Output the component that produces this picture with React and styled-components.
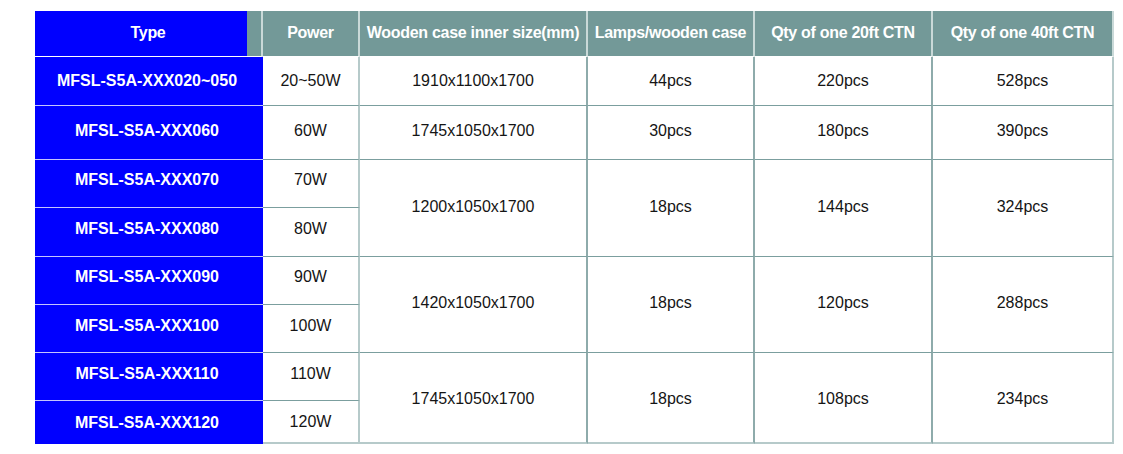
import React from "react";
import styled, { createGlobalStyle } from "styled-components";

const GlobalStyle = createGlobalStyle`
  body {
    margin: 0;
    background: #ffffff;
    font-family: "Liberation Sans", Arial, sans-serif;
  }
`;

// pad lifts the text up from the middle of its cell (negative drops it)
const groups = [
  {
    items: [{ type: "MFSL-S5A-XXX020~050", power: "20~50W", pad: 0 }],
    size: "1910x1100x1700",
    lamps: "44pcs",
    c20: "220pcs",
    c40: "528pcs",
    pad: 0,
  },
  {
    items: [{ type: "MFSL-S5A-XXX060", power: "60W", pad: 4 }],
    size: "1745x1050x1700",
    lamps: "30pcs",
    c20: "180pcs",
    c40: "390pcs",
    pad: 4,
  },
  {
    items: [
      { type: "MFSL-S5A-XXX070", power: "70W", pad: 7 },
      { type: "MFSL-S5A-XXX080", power: "80W", pad: 7 },
    ],
    size: "1200x1050x1700",
    lamps: "18pcs",
    c20: "144pcs",
    c40: "324pcs",
    pad: 3,
  },
  {
    items: [
      { type: "MFSL-S5A-XXX090", power: "90W", pad: 8 },
      { type: "MFSL-S5A-XXX100", power: "100W", pad: 5 },
    ],
    size: "1420x1050x1700",
    lamps: "18pcs",
    c20: "120pcs",
    c40: "288pcs",
    pad: 4,
  },
  {
    items: [
      { type: "MFSL-S5A-XXX110", power: "110W", pad: 5 },
      { type: "MFSL-S5A-XXX120", power: "120W", pad: -1 },
    ],
    size: "1745x1050x1700",
    lamps: "18pcs",
    c20: "108pcs",
    c40: "234pcs",
    pad: -3,
  },
];

const headers = [
  "Power",
  "Wooden case inner size(mm)",
  "Lamps/wooden case",
  "Qty of one 20ft CTN",
  "Qty of one 40ft CTN",
];

const Page = styled.div`
  padding: 11px 0 0 35px;
`;

const Table = styled.div`
  display: grid;
  grid-template-columns: 228px 97px 228px 167px 178px 181px;
  grid-template-rows: 46px 49px 54px 48px 49px 48px 48px 48px 43px;
  width: 1079px;
`;

const Cell = styled.div`
  box-sizing: border-box;
  display: flex;
  align-items: center;
  justify-content: center;
  white-space: nowrap;
  font-size: 16px;
  grid-row: ${(p) => p.$row} / span ${(p) => p.$span || 1};
  grid-column: ${(p) => p.$col};
  padding-bottom: ${(p) => Math.max(p.$pad || 0, 0)}px;
  padding-top: ${(p) => Math.max(-(p.$pad || 0), 0)}px;
`;

const HeadCell = styled(Cell)`
  background: #739998;
  color: #ffffff;
  font-weight: bold;
  letter-spacing: -0.3px;
  border-right: 2px solid #c9d9d8;
  border-bottom: 1px solid #ffffff;
  padding-bottom: 2px;

  &:last-child {
    border-right: none;
  }
`;

const TypeHead = styled(HeadCell)`
  background: linear-gradient(to right, #0000ff 212px, #739998 212px);
`;

const TypeCell = styled(Cell)`
  background: #0000ff;
  color: #ffffff;
  font-weight: bold;
  padding-right: 4px;
  border-bottom: 1px solid ${(p) => (p.$last ? "#0000ff" : "#c4c4ff")};
`;

const BodyCell = styled(Cell)`
  background: #ffffff;
  color: #151515;
  border-right: 2px solid ${(p) => (p.$light ? "#b6caca" : "#8eabab")};
  border-bottom: ${(p) => (p.$last ? "2px solid #b6caca" : "1px solid #7b9e9e")};
`;

export default function App() {
  let row = 2;
  const cells = [];

  groups.forEach((g, gi) => {
    const start = row;
    const span = g.items.length;
    const lastGroup = gi === groups.length - 1;

    g.items.forEach((it, i) => {
      const r = start + i;
      const last = lastGroup && i === span - 1;
      cells.push(
        <TypeCell key={`t${r}`} $row={r} $col={1} $pad={it.pad} $last={last}>
          {it.type}
        </TypeCell>
      );
      cells.push(
        <BodyCell key={`p${r}`} $row={r} $col={2} $pad={it.pad} $light $last={last}>
          {it.power}
        </BodyCell>
      );
    });

    [g.size, g.lamps, g.c20, g.c40].forEach((v, ci) => {
      cells.push(
        <BodyCell
          key={`g${start}-${ci}`}
          $row={start}
          $span={span}
          $col={ci + 3}
          $pad={g.pad}
          $light={ci === 3}
          $last={lastGroup}
        >
          {v}
        </BodyCell>
      );
    });

    row += span;
  });

  return (
    <>
      <GlobalStyle />
      <Page>
        <Table>
          <TypeHead $row={1} $col={1}>
            Type
          </TypeHead>
          {headers.map((h, i) => (
            <HeadCell key={h} $row={1} $col={i + 2}>
              {h}
            </HeadCell>
          ))}
          {cells}
        </Table>
      </Page>
    </>
  );
}
